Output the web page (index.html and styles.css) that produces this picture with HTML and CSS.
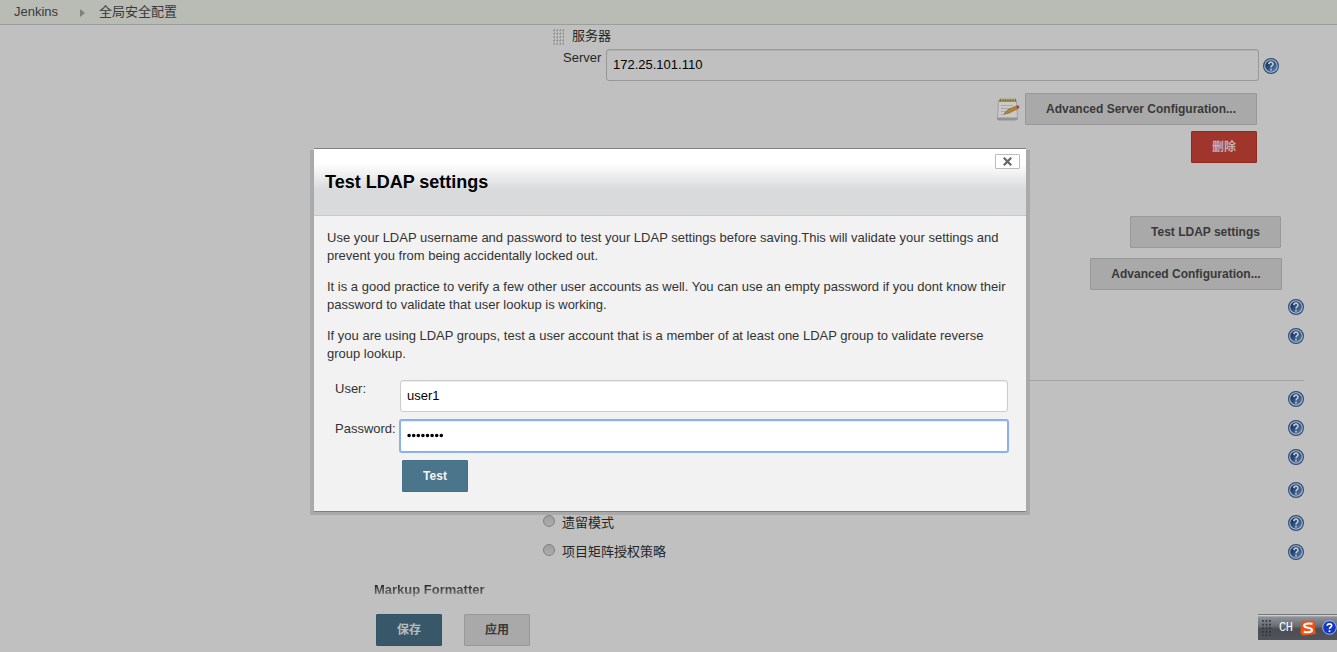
FILE: index.html
```html
<!DOCTYPE html>
<html lang="zh">
<head>
<meta charset="utf-8">
<title>Jenkins</title>
<link rel="stylesheet" href="styles.css">
</head>
<body>
<svg class="defs" width="0" height="0" aria-hidden="true">
  <defs>
    <linearGradient id="blue" x1="0" y1="0" x2="1" y2="1"><stop offset="0.2" stop-color="#173768"/><stop offset="1" stop-color="#5c80ad"/></linearGradient>
    <pattern id="dots" width="3" height="3.400" patternUnits="userSpaceOnUse"><rect width="2" height="2" fill="#8c8c8c"/><rect width="1" height="1" fill="#c8c8c8"/></pattern>
    <symbol id="help" viewBox="0 0 16 16">
      <circle cx="8" cy="8" r="7.4" fill="#b9c1cb" stroke="#2b4c7c" stroke-width="1.2"/>
      <circle cx="8" cy="8" r="5.8" fill="url(#blue)"/>
      <path d="M5.900 6.100C6 3.500 10 3.500 10 6C10 7.600 8 7.500 8 9.400M8 10.800V12.500" fill="none" stroke="#c0c5cb" stroke-width="1.700"/>
    </symbol>
  </defs>
</svg>
<nav class="crumbs"><span>Jenkins</span><i class="arrow"></i><span>全局安全配置</span></nav>
<main class="config">
  <div class="row title"><svg class="grip" width="12" height="17"><rect width="12" height="17" fill="url(#dots)"/></svg><span>服务器</span></div>
  <div class="row server"><label>Server</label><div class="input dim">172.25.101.110</div><svg class="help"><use href="#help"/></svg></div>
  <div class="row advanced">
    <svg class="note" width="24" height="24" viewBox="0 0 24 24">
      <path d="M2.500 3.500H20.500L21.500 22H1.500Z" fill="#c9c9c7" stroke="#a0a0a0"/>
      <path d="M1 20.500H21.600V22.500L19 23.500H3L1 22.500Z" fill="#939393"/>
      <path d="M3 2.500H20V5H3Z" fill="#a08c38"/>
      <path d="M4.500 1.500V4M7 1.500V4M9.500 1.500V4M12 1.500V4M14.500 1.500V4M17 1.500V4M19.500 1.500V4" stroke="#77662c" stroke-width=".8"/>
      <path d="M5 8.500H17M5 11.500H14M5 14.500H10M5 17.500H9" stroke="#a8a8a8"/>
      <path d="M8 17L11.500 13L20.500 9L22 11.500L13 16Z" fill="#b98433" stroke="#805c28" stroke-width=".7"/>
      <path d="M20 9L22.300 8.200L23.600 10.500L21.700 12Z" fill="#ad4440"/>
    </svg>
    <button class="btn">Advanced Server Configuration...</button>
  </div>
  <div class="row remove"><button class="btn danger">删除</button></div>
  <div class="row test"><button class="btn">Test LDAP settings</button></div>
  <div class="row more"><button class="btn">Advanced Configuration...</button></div>
  <div class="row h28"><svg class="help"><use href="#help"/></svg></div>
  <div class="row h30"><svg class="help"><use href="#help"/></svg></div>
  <div class="divider"></div>
  <div class="row h28"><svg class="help"><use href="#help"/></svg></div>
  <div class="row h30"><svg class="help"><use href="#help"/></svg></div>
  <div class="row h28"><svg class="help"><use href="#help"/></svg></div>
  <div class="row h38"><svg class="help"><use href="#help"/></svg></div>
  <div class="row h28"><i class="radio"></i><span>遗留模式</span><svg class="help"><use href="#help"/></svg></div>
  <div class="row h30"><i class="radio"></i><span>项目矩阵授权策略</span><svg class="help"><use href="#help"/></svg></div>
  <h2 class="section">Markup Formatter</h2>
  <div class="actions"><button class="btn primary muted">保存</button><button class="btn">应用</button></div>
</main>

<section class="dialog">
  <header class="dialog-head"><h1>Test LDAP settings</h1>
    <button class="close"><svg width="9" height="9" viewBox="0 0 9 9"><path d="M.8 .8L8.200 8.200M8.200 .8L.8 8.200" stroke="#666" stroke-width="2.200"/></svg></button>
  </header>
  <div class="dialog-body">
    <p>Use your LDAP username and password to test your LDAP settings before saving.This will validate your settings and<br>prevent you from being accidentally locked out.</p>
    <p>It is a good practice to verify a few other user accounts as well. You can use an empty password if you dont know their<br>password to validate that user lookup is working.</p>
    <p>If you are using LDAP groups, test a user account that is a member of at least one LDAP group to validate reverse<br>group lookup.</p>
    <div class="form">
      <label>User:</label><div class="input">user1</div>
      <label>Password:</label><div class="input focus"><svg width="37" height="5" viewBox="0 0 37 5"><path d="M2.100 2.500h.01M6.700 2.500h.01M11.300 2.500h.01M15.900 2.500h.01M20.500 2.500h.01M25.100 2.500h.01M29.700 2.500h.01M34.300 2.500h.01" stroke="#000" stroke-width="3.600" stroke-linecap="round"/></svg></div>
      <button class="btn primary">Test</button>
    </div>
  </div>
</section>

<aside class="langbar">
  <svg class="lang-grip" width="9" height="17"><path d="M1 1v16M4.500 1v16M8 1v16" stroke="#2c3038" stroke-width="1.500" stroke-dasharray="1.700 2"/></svg>
  <span>CH</span>
  <svg class="sogou" width="16" height="16" viewBox="0 0 16 16"><path d="M1.500 1.500L14 .3L15.800 14L2.500 15.800L.3 13Z" fill="#f4500d"/><path d="M12.500 3.800C8 3.200 4 3.600 4.100 5.800C4.200 8.200 12 7.300 12 9.900C12 12.500 7 12.600 3.700 11.900" fill="none" stroke="#fff" stroke-width="2.100"/></svg>
  <svg class="lang-help" width="15" height="15" viewBox="0 0 15 15"><circle cx="7.500" cy="7.500" r="6.800" fill="#1436c4" stroke="#a9b7dd"/><path d="M5.200 5.700C5.300 3.200 9.800 3.200 9.700 5.600C9.700 7.200 7.500 7.200 7.500 9M7.500 10.200V12" fill="none" stroke="#fff" stroke-width="1.700"/></svg>
</aside>
</body>
</html>
```
FILE: styles.css
```css
* { box-sizing: border-box; }
body { margin: 0; width: 1337px; height: 652px; overflow: hidden; position: relative; background: #c0c0c0; color: #262626; font: 13px/18px "Liberation Sans", "Noto Sans CJK SC", sans-serif; }
svg { display: block; flex: none; }
.defs { position: absolute; }
.crumbs { height: 25px; padding: 0 14px; display: flex; align-items: center; background: #b9bbb5; border-bottom: 1px solid #9c9e9b; color: #3a3a3a; }
.arrow { margin: 1px 15px 0 22px; border: 4px solid transparent; border-left: 5px solid #808080; border-right: 0; }
.arrow + span { margin-left: -1px; }
.row { display: flex; align-items: center; padding-right: 33px; }
.row .help { margin-left: auto; }
.help { width: 16px; height: 16px; }
.title { height: 24px; padding-left: 553px; gap: 7px; }
.title .grip { margin-top: 1px; }
.title span { margin-top: -2px; }
.server { height: 32px; padding: 0 58px 0 563px; }
.server label { width: 43px; align-self: flex-start; }
.server .help { margin: 1px 0 0; }
.input { height: 32px; padding: 0 6px 2px; display: flex; align-items: center; background: #fff; border: 1px solid #ccc; border-radius: 3px; color: #000; box-shadow: inset 0 1px 1px rgba(0,0,0,.08); }
.input.dim { width: 653px; margin-right: 4px; padding-bottom: 0; background: #c0c0c0; border-color: #999; }
.advanced { margin-top: 12px; height: 32px; justify-content: flex-end; padding-right: 80px; gap: 5px; }
.btn { height: 32px; padding: 0; border: 1px solid #989898; border-radius: 1px; background: #a9a9a9; color: #393939; font: bold 12px/18px "Liberation Sans", "Noto Sans CJK SC", sans-serif; white-space: nowrap; }
.advanced .btn { width: 232px; }
.remove { margin-top: 6px; justify-content: flex-end; padding-right: 80px; }
.btn.danger { width: 66px; background: #a0352b; border-color: #91291f; color: #c5b0b0; }
.test { margin-top: 53px; justify-content: flex-end; padding-right: 56px; }
.test .btn { width: 151px; }
.more { margin: 10px 0 3px; justify-content: flex-end; padding-right: 55px; }
.more .btn { width: 192px; }
.h28 { height: 28px; }
.h30 { height: 30px; }
.h38 { height: 38px; }
.divider { height: 1px; margin: 29px 33px 4px 374px; background: #a4a4a4; }
.radio { width: 12px; height: 12px; margin: -4px 7px 0 543px; border: 1px solid #808080; border-radius: 50%; background: linear-gradient(#9f9f9f, #adadad); }
.section { margin: 14px 0 0 374px; width: max-content; height: 18px; font: bold 12px/18px "Liberation Sans", sans-serif; font-size: 13px; color: transparent; background: linear-gradient(#222 20%, #666 65%, #aaa 90%); background-clip: text; }
.actions { display: flex; gap: 22px; padding: 15px 0 0 376px; }
.actions .btn { width: 66px; }
.btn.primary { width: 66px; background: #4b758b; border-color: #437087; color: #f4f4f4; }
.btn.muted { background: #38586a; border-color: #315466; color: #b9bcbe; }

.dialog { position: absolute; left: 314px; top: 148px; width: 712px; height: 364px; border-top: 1px solid #808080; border-bottom: 1px solid #808080; background: #f2f2f2; color: #333; }
.dialog::before { content: ""; position: absolute; z-index: -1; inset: 1px -4px -4px; background: #aaa; }
.dialog::after { content: ""; position: absolute; z-index: -1; inset: 0; background: #f2f2f2; }
.dialog-head { display: flex; justify-content: space-between; height: 67px; padding: 5px 6px 0 11px; border-bottom: 1px solid #c8c8c8; background: linear-gradient(#fff 22%, #d9dadc 62%); }
.dialog-head h1 { margin: 17px 0 0; font: bold 18px/22px "Liberation Sans", sans-serif; color: #000; }
.close { width: 25px; height: 15px; padding: 0; border: 1px solid #bbb; border-radius: 1px; background: #fff; display: flex; align-items: center; justify-content: center; }
.dialog-body { padding: 13px 18px 0 13px; white-space: nowrap; }
.dialog p { margin: 0 0 13px; }
.form { display: grid; grid-template-columns: 65px 608px; grid-template-rows: 40px 40px 32px; padding-left: 8px; margin-top: 17px; }
.form .input { padding-bottom: 1px; }
.form .input.focus { border: 2px solid #8ab0f0; height: 34px; margin: -1px; }
.form .primary { grid-column: 2; margin-left: 2px; }
.langbar { position: absolute; right: 0; top: 614px; width: 79px; height: 26px; padding-left: 4px; display: flex; align-items: center; background: linear-gradient(#e2e3e5 0, #8e9198 8%, #696c73 45%, #4a4e55 55%, #50545a); border-top: 1px solid #777; color: #fff; font: 12px/16px "Liberation Mono", monospace; }
.langbar span { margin: 0 7px 0 8px; width: 14px; letter-spacing: -.5px; }
.sogou { margin-right: 6px; }
```
